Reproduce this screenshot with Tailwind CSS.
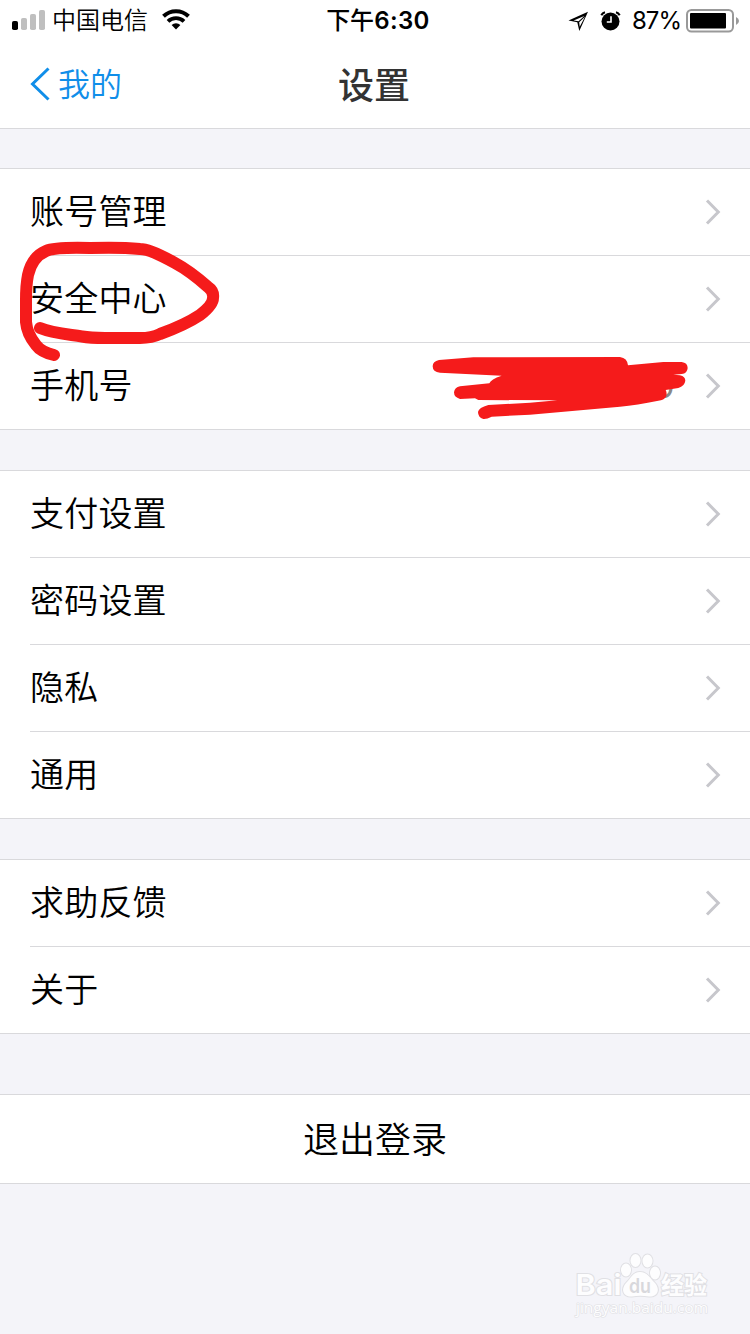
<!DOCTYPE html>
<html lang="zh-CN">
<head>
    <meta charset="UTF-8">
    <meta name="viewport" content="width=device-width, initial-scale=1.0">
    <title>设置</title>
    <script src="https://cdn.jsdelivr.net/npm/@tailwindcss/browser@4"></script>
</head>
<body class="relative w-[750px] h-[1334px] overflow-hidden bg-[#f4f4f9] text-black font-['Inter','Noto_Sans_CJK_SC',sans-serif]">
    <!-- Shared row arrow -->
    <svg class="hidden">
        <symbol id="arrow" viewBox="0 0 16 28">
            <path d="M2 2.5L13.3 14L2 25.5" fill="none" stroke="#c7c7cc" stroke-width="3"/>
        </symbol>
    </svg>

    <!-- Header Section -->
    <header class="h-[129px] bg-white border-b border-[#d9d9dc]">
        <!-- Status bar -->
        <div class="grid grid-cols-3 h-10 items-center pl-3 pr-[11px]">
            <div class="flex items-center">
                <svg class="mb-0.5 w-[34px] h-[20px]" viewBox="0 0 34 20">
                    <rect x="0" y="11" width="6" height="9" rx="1.8" fill="#000"/>
                    <rect x="9" y="8" width="6" height="12" rx="1.8" fill="#bfbfbf"/>
                    <rect x="18" y="4" width="6" height="16" rx="1.8" fill="#bfbfbf"/>
                    <rect x="27" y="0" width="6" height="20" rx="1.8" fill="#bfbfbf"/>
                </svg>
                <span class="ml-1.5 pt-px text-[24px] leading-10 font-[350] whitespace-nowrap">中国电信</span>
                <svg class="ml-[13px] mb-0.5 w-[30px] h-[21px]" viewBox="0 0 30 21">
                    <path d="M2.500 7.300A18 18 0 0 1 27.500 7.300" fill="none" stroke="#000" stroke-width="4"/>
                    <path d="M7 12.300A11.500 11.500 0 0 1 23 12.300" fill="none" stroke="#000" stroke-width="3.800"/>
                    <path d="M10.600 16A6.600 6.600 0 0 1 19.400 16L15 20.400Z"/>
                </svg>
            </div>
            <div class="pl-[5px] pt-px text-center text-[24px] leading-10 font-semibold whitespace-nowrap"><span class="font-medium">下午</span><span class="tracking-[0.4px]">6:30</span></div>
            <div class="flex items-center justify-end">
                <svg class="w-[20px] h-[20px]" viewBox="0 0 20 20">
                    <path fill-rule="evenodd" d="M20 0.800L0.500 9.500L9.300 11.200L11.300 20ZM16.300 5L10.600 10.300L5.600 9.400ZM17 5.800L11.700 15.800L11.200 11.200Z"/>
                </svg>
                <svg class="ml-3 w-[21px] h-[20px]" viewBox="0 0 21 20">
                    <circle cx="10.5" cy="10.5" r="9"/>
                    <path d="M1.3 4.3A6 6 0 0 1 5 1.2M19.7 4.3A6 6 0 0 0 16 1.2" fill="none" stroke="#000" stroke-width="2"/>
                    <path d="M11 5.2V11H6.8" fill="none" stroke="#fff" stroke-width="1.6"/>
                </svg>
                <span class="ml-[11px] pt-px text-[24px] leading-10 tracking-[-1px] -mr-px">87%</span>
                <svg class="ml-[6px] w-[53px] h-[24px]" viewBox="0 0 53 24">
                    <rect x="1" y="1" width="46" height="21.5" rx="4.5" fill="none" stroke="#999" stroke-width="2"/>
                    <rect x="4" y="4" width="36" height="15.5" rx="1"/>
                    <path d="M50 8Q53 9.5 53 12T50 16Z" fill="#999"/>
                </svg>
            </div>
        </div>

        <!-- Navigation bar -->
        <div class="grid grid-cols-3 h-[88px] items-center px-[30px]">
            <a href="#" class="flex items-center text-[#108ee9]">
                <svg class="w-[20px] h-[34px]" viewBox="0 0 20 34">
                    <path d="M18.5 1.5L2.5 17L18.5 32.5" fill="none" stroke="#108ee9" stroke-width="3"/>
                </svg>
                <span class="ml-2 pt-0.5 text-[32px] font-[350]">我的</span>
            </a>
            <h1 class="pt-1 pr-0.5 text-center text-[36px] font-medium text-[#333]">设置</h1>
        </div>
    </header>

    <!-- Account -->
    <ul class="mt-[39px] bg-white border-y border-[#d9d9dc] text-[34px] font-[350] tracking-[0.2px]">
        <li class="flex h-[86px] items-center justify-between pl-[30px] pr-[29px] leading-none"><span>账号管理</span><svg class="w-4 h-7"><use href="#arrow"/></svg></li>
        <li class="ml-[30px] flex h-[87px] items-center justify-between border-t border-[#d9d9dc] pr-[29px] leading-none"><span>安全中心</span><svg class="w-4 h-7"><use href="#arrow"/></svg></li>
        <li class="ml-[30px] flex h-[87px] items-center justify-between border-t border-[#d9d9dc] pr-[29px] leading-none">
            <span>手机号</span>
            <span class="flex items-center"><span class="mr-[30px] text-[34px] font-normal text-[#888]">0</span><svg class="w-4 h-7"><use href="#arrow"/></svg></span>
        </li>
    </ul>

    <!-- Preferences -->
    <ul class="mt-10 bg-white border-y border-[#d9d9dc] text-[34px] font-[350] tracking-[0.2px]">
        <li class="flex h-[86px] items-center justify-between pl-[30px] pr-[29px] leading-none"><span>支付设置</span><svg class="w-4 h-7"><use href="#arrow"/></svg></li>
        <li class="ml-[30px] flex h-[87px] items-center justify-between border-t border-[#d9d9dc] pr-[29px] leading-none"><span>密码设置</span><svg class="w-4 h-7"><use href="#arrow"/></svg></li>
        <li class="ml-[30px] flex h-[87px] items-center justify-between border-t border-[#d9d9dc] pr-[29px] leading-none"><span>隐私</span><svg class="w-4 h-7"><use href="#arrow"/></svg></li>
        <li class="ml-[30px] flex h-[87px] items-center justify-between border-t border-[#d9d9dc] pr-[29px] leading-none"><span>通用</span><svg class="w-4 h-7"><use href="#arrow"/></svg></li>
    </ul>

    <!-- Help -->
    <ul class="mt-10 bg-white border-y border-[#d9d9dc] text-[34px] font-[350] tracking-[0.2px]">
        <li class="flex h-[86px] items-center justify-between pl-[30px] pr-[29px] leading-none"><span>求助反馈</span><svg class="w-4 h-7"><use href="#arrow"/></svg></li>
        <li class="ml-[30px] flex h-[87px] items-center justify-between border-t border-[#d9d9dc] pr-[29px] leading-none"><span>关于</span><svg class="w-4 h-7"><use href="#arrow"/></svg></li>
    </ul>

    <button class="mt-[60px] block h-[90px] w-full border-y border-[#d9d9dc] bg-white pt-0.5 text-[36px] leading-none font-[350]">退出登录</button>

    <!-- Hand-drawn marks -->
    <svg class="absolute left-0 top-0 w-[750px] h-[450px]" viewBox="0 0 750 450">
        <path d="M40 328C52 333 66 334 82 336.500Q90 338 105 338H140Q152 338 160 334Q185 325 200 315Q213 305 213 298Q214 291 208 287Q190 271 175 263Q150 249 140 249Q120 247 90 248Q55 247 46 251Q32 257 28 275Q26 285 26 300V322Q27 334 36 345Q41 352 54 355" fill="none" stroke="#f51b1b" stroke-width="12" stroke-linecap="round" stroke-linejoin="round"/>
        <path transform="translate(420 340) scale(.33333)" d="M57 60L160 52L600 51Q622 54 624 76L730 66H785Q803 68 803 84Q802 100 785 102L760 104L780 106Q796 110 796 122Q794 138 775 144L737 150Q742 160 738 170Q732 180 715 182Q650 195 600 200L330 224L215 230Q200 238 190 237Q174 232 174 216Q176 203 205 195L330 188L412 181L175 180L165 175L120 177Q102 172 102 157Q104 142 120 139L208 130Q212 118 245 107L60 98Q38 96 38 79Q38 64 57 60Z" fill="#f51b1b"/>
    </svg>

    <!-- Watermark -->
    <svg class="absolute left-[570px] top-[1248px] w-[150px] h-[76px]" viewBox="0 0 150 76" fill="#fdfdfe" stroke="#e0e0e4" stroke-width="2" paint-order="stroke">
        <ellipse cx="56" cy="22" rx="5" ry="6.500"/>
        <ellipse cx="65.500" cy="12.500" rx="5" ry="6.500"/>
        <ellipse cx="77.500" cy="13" rx="5" ry="6.500"/>
        <ellipse cx="85" cy="25" rx="5" ry="6.500"/>
        <path d="M70 24C77 24 80 30 84 34C91 41 88 49 79 48.500Q70 47 62 48.500C53 49 50 41 57 34C61 30 63 24 70 24Z"/>
        <text x="5.500" y="46.500" font-size="29" font-weight="600" textLength="46" lengthAdjust="spacingAndGlyphs" class="font-['Inter',sans-serif]">Bai</text>
        <text x="59" y="45" font-size="20" font-weight="600" textLength="22" lengthAdjust="spacingAndGlyphs" fill="#d8d8dc" stroke="none" class="font-['Inter',sans-serif]">du</text>
        <text x="91" y="46" font-size="24" font-weight="700" textLength="46" lengthAdjust="spacingAndGlyphs" class="font-['Noto_Sans_CJK_SC',sans-serif]">经验</text>
        <text x="6" y="65" font-size="15" textLength="132" lengthAdjust="spacingAndGlyphs" stroke-width="1.200" class="font-['Open_Sans',sans-serif]">jingyan.baidu.com</text>
    </svg>
</body>
</html>
